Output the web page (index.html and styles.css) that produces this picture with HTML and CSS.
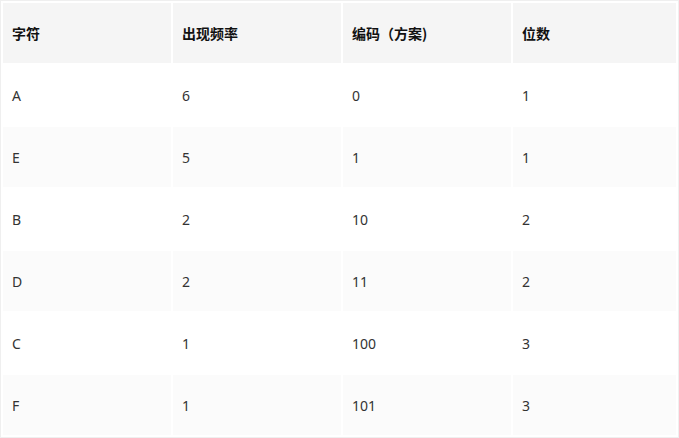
FILE: index.html
```html
<!DOCTYPE html>
<html>
<head>
<meta charset="utf-8">
<link rel="stylesheet" href="styles.css">
</head>
<body>
<table class="code-table">
  <colgroup>
    <col class="c1"><col class="c2"><col class="c3"><col class="c4">
  </colgroup>
  <thead>
    <tr><th>字符</th><th>出现频率</th><th>编码（方案)</th><th>位数</th></tr>
  </thead>
  <tbody>
    <tr><td>A</td><td>6</td><td>0</td><td>1</td></tr>
    <tr><td>E</td><td>5</td><td>1</td><td>1</td></tr>
    <tr><td>B</td><td>2</td><td>10</td><td>2</td></tr>
    <tr><td>D</td><td>2</td><td>11</td><td>2</td></tr>
    <tr><td>C</td><td>1</td><td>100</td><td>3</td></tr>
    <tr><td>F</td><td>1</td><td>101</td><td>3</td></tr>
  </tbody>
</table>
</body>
</html>
```

FILE: styles.css
```css
html, body {
  margin: 0;
  padding: 0;
  background: #ffffff;
}
.code-table {
  width: 679px;
  table-layout: fixed;
  border-collapse: separate;
  border-spacing: 2px;
  border: 1px solid #efefef;
  font-family: "Noto Sans", "Noto Sans CJK SC", sans-serif;
  font-size: 14px;
  color: #333333;
}
.c1, .c2, .c3 { width: 168px; }
.c4 { width: 163px; }
.code-table th,
.code-table td {
  height: 60px;
  padding: 0 9px;
  text-align: left;
  vertical-align: middle;
  box-sizing: border-box;
}
.code-table th {
  background: #f5f5f5;
  font-weight: bold;
  color: #111111;
  font-family: "Noto Sans CJK SC", sans-serif;
}
.code-table tbody tr:nth-child(even) td {
  background: #fbfbfb;
}
```
